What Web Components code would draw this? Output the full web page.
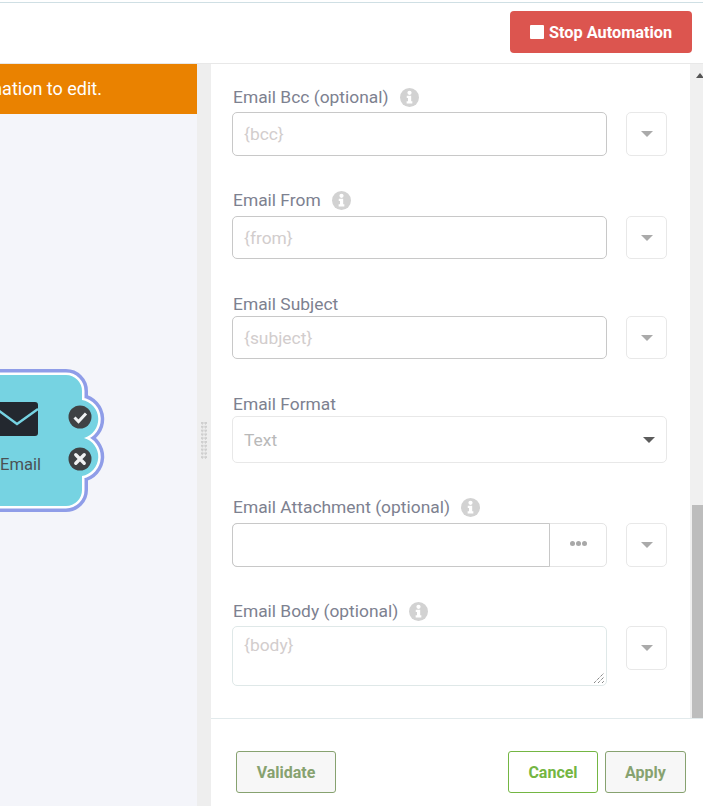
<!DOCTYPE html>
<html>
<head>
<meta charset="utf-8">
<title>Automation</title>
<style>
    html, body { margin: 0; padding: 0; height: 100%; background: #fff; }
    body { font-family: Roboto, "Liberation Sans", sans-serif; overflow: hidden; }
</style>
</head>
<body>
<app-shell>
    <top-bar slot="top"></top-bar>
    <flow-canvas slot="canvas">
        <email-node></email-node>
    </flow-canvas>
    <pane-splitter slot="splitter"></pane-splitter>
    <settings-panel slot="panel">
        <form-field label="Email Bcc (optional)" info gap="5" height="44" placeholder="{bcc}" style="margin-top:23px"></form-field>
        <form-field label="Email From" info gap="6" height="43" placeholder="{from}" style="margin-top:34px"></form-field>
        <form-field label="Email Subject" gap="2" height="43" placeholder="{subject}" style="margin-top:35px"></form-field>
        <form-field label="Email Format" gap="2" height="47" placeholder="Text" kind="select" style="margin-top:35px"></form-field>
        <form-field label="Email Attachment (optional)" info gap="6" height="44" kind="browse" style="margin-top:34px"></form-field>
        <form-field label="Email Body (optional)" info gap="5" height="60" placeholder="{body}" kind="area" style="margin-top:34px"></form-field>
    </settings-panel>
</app-shell>

<script>
const infoIcon = `<svg width="19" height="19" viewBox="0 0 18 18"><circle cx="9" cy="9" r="9" fill="#d2d2d2"/><circle cx="9" cy="4.6" r="2" fill="#fff"/><path d="M6.4 7.4h4.2v5.2h1.1v2H6.3v-2h1.3V9.4H6.4z" fill="#fff"/></svg>`;
const caret = `<svg width="12" height="6" viewBox="0 0 12 6"><path d="M0 0h12L6 6z" fill="currentColor"/></svg>`;

class AppShell extends HTMLElement {
    constructor() {
        super();
        this.attachShadow({ mode: 'open' }).innerHTML = `
            <style>
                :host { display: grid; width: 703px; height: 806px; grid-template-columns: 197px 14px 1fr; grid-template-rows: 64px 1fr; overflow: hidden; }
                .top { grid-column: 1 / -1; display: block; }
            </style>
            <div class="top"><slot name="top"></slot></div>
            <slot name="canvas"></slot>
            <slot name="splitter"></slot>
            <slot name="panel"></slot>
        `;
    }
}

class TopBar extends HTMLElement {
    constructor() {
        super();
        this.attachShadow({ mode: 'open' }).innerHTML = `
            <style>
                :host { display: flex; justify-content: flex-end; align-items: flex-start; box-sizing: border-box; height: 64px; padding: 11px 11px 0 0; background: #fff; border-bottom: 1px solid #e8e8e8; position: relative; }
                :host::before { content: ''; position: absolute; left: 0; right: 0; top: 2px; height: 1px; background: #cfdfe4; }
                button { display: flex; align-items: center; width: 182px; height: 42px; padding: 0 0 0 20px; border: 0; border-radius: 4px; background: #dc554f; color: #fff; font: 700 16.3px Roboto, "Liberation Sans", sans-serif; }
                i { display: block; width: 14px; height: 14px; margin-right: 5px; background: #fff; border-radius: 1px; }
            </style>
            <button><i></i>Stop Automation</button>
        `;
    }
}

class FlowCanvas extends HTMLElement {
    constructor() {
        super();
        this.attachShadow({ mode: 'open' }).innerHTML = `
            <style>
                :host { display: block; position: relative; overflow: hidden; background: #f4f5fa; height: 742px; }
                .banner { display: flex; justify-content: flex-end; box-sizing: border-box; height: 50px; padding: 0 95px 2px 0; align-items: center; background: #ea8200; color: #fff; font-size: 18px; white-space: nowrap; }
            </style>
            <div class="banner"><span>automation to edit.</span></div>
            <slot></slot>
        `;
    }
}

class EmailNode extends HTMLElement {
    constructor() {
        super();
        const outline = 'M-30 11H66A16 16 0 0 1 82 27V36A19.5 19.5 0 0 1 84 74A19.5 19.5 0 0 1 82 112V126A16 16 0 0 1 66 142H-30Z';
        this.attachShadow({ mode: 'open' }).innerHTML = `
            <style>
                :host { display: block; position: absolute; left: 0; top: 300px; width: 110px; height: 150px; }
                svg { position: absolute; left: 0; top: 0; overflow: visible; }
                span { position: absolute; left: 0; top: 89px; font-size: 16.6px; line-height: 24px; color: #4b5154; }
            </style>
            <svg width="110" height="150" viewBox="0 0 110 150">
                <path d="${outline}" fill="none" stroke="#8f9de8" stroke-width="12"/>
                <path d="${outline}" fill="none" stroke="#fff" stroke-width="5"/>
                <path d="${outline}" fill="#76d3e2"/>
                <path d="M-1 38H35a3 3 0 0 1 3 3V69a3 3 0 0 1-3 3H-1a3 3 0 0 1-3-3V41a3 3 0 0 1 3-3z" fill="#23282f"/>
                <path d="M-6 43L17 60L38 45" fill="none" stroke="#76d3e2" stroke-width="2.4"/>
                <circle cx="80" cy="53" r="11.5" fill="#3f4244"/>
                <path d="M74.5 53.5L78.5 57.5L86 49.5" fill="none" stroke="#f0f2f2" stroke-width="3"/>
                <circle cx="80" cy="95" r="11.5" fill="#3f4244"/>
                <path d="M75.8 90.8L84.2 99.2M84.2 90.8L75.8 99.2" fill="none" stroke="#f0f2f2" stroke-width="3.4" stroke-linecap="round"/>
            </svg>
            <span>Email</span>
        `;
    }
}

class PaneSplitter extends HTMLElement {
    constructor() {
        super();
        this.attachShadow({ mode: 'open' }).innerHTML = `
            <style>
                :host { display: flex; justify-content: center; padding-top: 358px; box-sizing: border-box; height: 742px; background: #eeeeee; }
                div { width: 6px; height: 38px; background-image: radial-gradient(circle at 1.25px 1.25px, #cfcfcf 1.25px, transparent 1.4px); background-size: 3.4px 3.8px; }
            </style>
            <div></div>
        `;
    }
}

class SettingsPanel extends HTMLElement {
    constructor() {
        super();
        this.attachShadow({ mode: 'open' }).innerHTML = `
            <style>
                :host { display: flex; flex-direction: column; height: 742px; background: #fff; }
                .main { display: flex; height: 654px; }
                .body { flex: 1; box-sizing: border-box; padding: 0 23px 0 21px; overflow: hidden; }
                .track { position: relative; width: 13px; background: #f0f0f0; }
                .track::before { content: ''; position: absolute; left: 6px; top: 9px; border: 4px solid transparent; border-top: 0; border-bottom: 5px solid #555; }
                .thumb { position: absolute; left: 2px; right: 0; bottom: 0; height: 213px; background: #bdbdbd; }
                footer { flex: 1; display: flex; align-items: flex-start; box-sizing: border-box; padding: 32px 17px 0 25px; border-top: 1px solid #e2eaec; gap: 7px; }
                footer .left { margin-right: auto; }
            </style>
            <div class="main">
                <div class="body"><slot></slot></div>
                <div class="track"><div class="thumb"></div></div>
            </div>
            <footer>
                <panel-button class="left" width="100" tone="muted">Validate</panel-button>
                <panel-button width="90" tone="green">Cancel</panel-button>
                <panel-button width="81" tone="muted">Apply</panel-button>
            </footer>
        `;
    }
}

class PanelButton extends HTMLElement {
    constructor() {
        super();
        const green = this.getAttribute('tone') === 'green';
        const color = green ? '#74b643' : '#87a270';
        this.attachShadow({ mode: 'open' }).innerHTML = `
            <style>
                :host { display: block; }
                button { display: block; box-sizing: border-box; width: ${this.getAttribute('width')}px; height: 42px; padding: 0; border: 1px solid ${color}; border-radius: 3px; background: ${green ? '#fff' : '#f7f7f7'}; color: ${color}; font: 700 16px Roboto, "Liberation Sans", sans-serif; }
            </style>
            <button><slot></slot></button>
        `;
    }
}

class FormField extends HTMLElement {
    constructor() {
        super();
        this.attachShadow({ mode: 'open' });
    }

    connectedCallback() {
        const kind = this.getAttribute('kind') || 'input';
        const height = this.getAttribute('height');
        const placeholder = this.getAttribute('placeholder') || '';
        const icon = this.hasAttribute('info') ? `<span class="info">${infoIcon}</span>` : '';
        let control = `<div class="box ${kind}"><span>${placeholder}</span></div>`;

        if (kind === 'browse') {
            control = `<div class="box browse"><div class="file"></div><div class="more"><b></b><b></b><b></b></div></div>`;
        }
        if (kind === 'area') {
            control = `<div class="box area"><span>${placeholder}</span>
                <svg class="grip" width="12" height="12" viewBox="0 0 12 12"><path d="M1 11L11 1M5 11L11 5M9 11L11 9" stroke="#555" stroke-width="1" stroke-dasharray="1 1"/></svg></div>`;
        }
        if (kind === 'select') {
            control = `<div class="box select"><span>${placeholder}</span><em>${caret}</em></div>`;
        }

        const more = kind === 'select' ? '' : `<div class="drop">${caret}</div>`;

        this.shadowRoot.innerHTML = `
            <style>
                :host { display: block; }
                label { display: flex; align-items: center; height: 20px; padding-left: 1px; margin-bottom: ${this.getAttribute('gap')}px; font-size: 17.4px; color: #7d8190; white-space: nowrap; }
                .info { display: block; height: 19px; margin-left: 11px; }
                .row { display: flex; align-items: flex-start; justify-content: space-between; }
                .box { display: flex; align-items: center; box-sizing: border-box; width: 375px; height: ${height}px; padding: 0 11px; border: 1px solid #c8c8c8; border-radius: 5px; font-size: 17.4px; color: #d2cdcd; position: relative; }
                .select { flex: 1; width: auto; justify-content: space-between; padding-right: 11px; border-color: #e8e8e8; color: #b9b9b9; }
                .select em { display: block; height: 6px; line-height: 0; color: #5c5c5c; }
                .area { align-items: flex-start; padding-top: 8px; border-color: #dfe8e8; }
                .grip { position: absolute; right: 1px; bottom: 1px; }
                .browse { padding: 0; border-color: #e4e4e4; }
                .file { width: 318px; height: ${height}px; margin: -1px 0 -1px -1px; box-sizing: border-box; border: 1px solid #c8c8c8; border-radius: 5px 0 0 5px; }
                .more { flex: 1; display: flex; justify-content: center; gap: 1px; margin-top: -4px; }
                .more b { display: block; width: 5px; height: 5px; border-radius: 50%; background: #a8a8a8; }
                .drop { display: flex; align-items: center; justify-content: center; box-sizing: border-box; width: 41px; height: ${Math.min(height, 44)}px; border: 1px solid #e8e8e8; border-radius: 5px; color: #aaa; }
            </style>
            <label>${this.getAttribute('label')}${icon}</label>
            <div class="row">${control}${more}</div>
        `;
    }
}

customElements.define('app-shell', AppShell);
customElements.define('top-bar', TopBar);
customElements.define('flow-canvas', FlowCanvas);
customElements.define('email-node', EmailNode);
customElements.define('pane-splitter', PaneSplitter);
customElements.define('panel-button', PanelButton);
customElements.define('form-field', FormField);
customElements.define('settings-panel', SettingsPanel);
</script>
</body>
</html>
